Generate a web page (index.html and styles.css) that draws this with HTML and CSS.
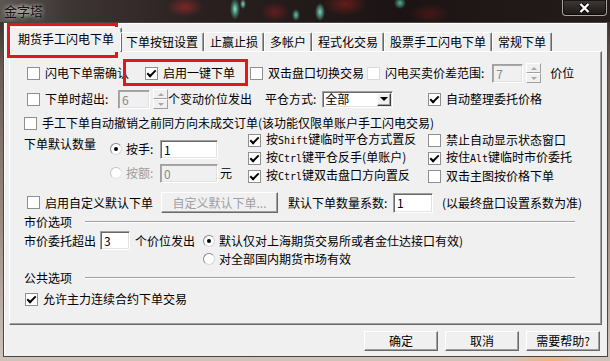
FILE: index.html
```html
<!DOCTYPE html>
<html lang="zh-CN">
<head>
  <meta charset="UTF-8">
  <title>金字塔</title>
  <link rel="stylesheet" href="styles.css">
</head>
<body>
  <div class="window">
    <div class="titlebar">
      <span class="title">金字塔</span>
      <button class="close-btn" title="关闭">
        <svg width="11" height="10" viewBox="0 0 11 10"><path d="M1.5 1 L9.5 9 M9.5 1 L1.5 9" stroke="#000" stroke-width="4"/><path d="M1.5 1 L9.5 9 M9.5 1 L1.5 9" stroke="#fff" stroke-width="2.4"/></svg>
      </button>
    </div>

    <div class="client">
      <div class="tabs">
        <div class="tab active">期货手工闪电下单</div>
        <div class="tab">下单按钮设置</div>
        <div class="tab">止赢止损</div>
        <div class="tab">多帐户</div>
        <div class="tab">程式化交易</div>
        <div class="tab">股票手工闪电下单</div>
        <div class="tab">常规下单</div>
      </div>

      <div class="panel">
        <div class="row row-flash">
          <label class="chk"><span class="cb"></span>闪电下单需确认</label>
          <label class="chk"><span class="cb on"></span>启用一键下单</label>
          <label class="chk"><span class="cb"></span>双击盘口切换交易</label>
          <div class="range">
            <label class="chk"><span class="cb dis"></span>闪电买卖价差范围:</label>
            <input class="field dis w-31" value="7" disabled>
            <span class="spin dis"><span class="up"></span><span class="down"></span></span>
            <span class="unit">价位</span>
          </div>
        </div>

        <div class="row row-over">
          <label class="chk"><span class="cb"></span>下单时超出:</label>
          <div class="inline">
            <input class="field dis w-32" value="6" disabled>
            <span class="spin dis"><span class="up"></span><span class="down"></span></span>
          </div>
          <span>个变动价位发出</span>
          <div class="inline gap-6">
            <span>平仓方式:</span>
            <div class="select"><span class="val">全部</span><span class="drop"></span></div>
          </div>
          <label class="chk"><span class="cb on"></span>自动整理委托价格</label>
        </div>

        <div class="row row-cancel">
          <label class="chk"><span class="cb"></span>手工下单自动撤销之前同方向未成交订单(该功能仅限单账户手工闪电交易)</label>
        </div>

        <div class="row row-qty">
          <div class="qty">
            <span class="qty-label">下单默认数量</span>
            <div class="qty-opts">
              <div class="qty-line">
                <label class="opt"><span class="rad on"></span><span class="opt-name">按手:</span></label>
                <input class="field w-58" value="1">
              </div>
              <div class="qty-line">
                <label class="opt dis"><span class="rad dis"></span><span class="opt-name">按额:</span></label>
                <input class="field dis w-58" value="0" disabled>
                <span class="yuan">元</span>
              </div>
            </div>
          </div>
          <div class="keys">
            <label class="chk"><span class="cb on"></span><span>按<span class="en">Shift</span>键临时平仓方式置反</span></label>
            <label class="chk"><span class="cb"></span>禁止自动显示状态窗口</label>
            <label class="chk"><span class="cb on"></span><span>按<span class="en">Ctrl</span>键平仓反手(单账户)</span></label>
            <label class="chk"><span class="cb on"></span><span>按住<span class="en">Alt</span>键临时市价委托</span></label>
            <label class="chk"><span class="cb on"></span><span>按<span class="en">Ctrl</span>键双击盘口方向置反</span></label>
            <label class="chk"><span class="cb"></span>双击主图按价格下单</label>
          </div>
        </div>

        <div class="row row-custom">
          <label class="chk"><span class="cb"></span>启用自定义默认下单</label>
          <div><button class="btn btn-custom" disabled>自定义默认下单...</button></div>
          <span>默认下单数量系数:</span>
          <div><input class="field w-40" value="1"></div>
          <span>(以最终盘口设置系数为准)</span>
        </div>

        <div class="group group-market">市价选项</div>

        <div class="row row-market">
          <span>市价委托超出</span>
          <div><input class="field w-30" value="3"></div>
          <span>个价位发出</span>
          <label class="opt"><span class="rad on"></span>默认仅对上海期货交易所或者金仕达接口有效)</label>
        </div>
        <div class="row row-market-all">
          <label class="opt"><span class="rad"></span>对全部国内期货市场有效</label>
        </div>

        <div class="group group-common">公共选项</div>

        <div class="row row-main">
          <label class="chk"><span class="cb on"></span>允许主力连续合约下单交易</label>
        </div>
      </div>

      <div class="footer">
        <button class="btn">确定</button>
        <button class="btn">取消</button>
        <button class="btn">需要帮助?</button>
      </div>
    </div>

    <!-- red annotation boxes -->
    <div class="mark mark-tab"></div>
    <div class="mark mark-onekey"></div>
  </div>
</body>
</html>
```

FILE: styles.css
```css
* {
  box-sizing: border-box;
}

body {
  margin: 0;
  width: 610px;
  height: 361px;
  overflow: hidden;
  font-family: "Noto Sans CJK SC", "Noto Sans", sans-serif;
  font-size: 12px;
  line-height: 14px;
  color: #000;
  background: #2a2420;
}

.window {
  position: relative;
  width: 610px;
  height: 361px;
  display: flex;
  flex-direction: column;
  background:
    radial-gradient(40px 8px at 550px 361px, #f2b27a, transparent),
    linear-gradient(to bottom, #3a3330 0, #3a3330 22px, #6b5d55 70px, #9b8a7e 220px, #cfc4bc 361px);
}

/* title bar */
.titlebar {
  height: 22px;
  flex: none;
  display: flex;
  align-items: flex-start;
  justify-content: space-between;
  background:
    radial-gradient(5px 11px at 235px 9px, #8ae6cf, rgba(80, 190, 160, .5) 55%, transparent),
    radial-gradient(3px 5px at 243px 4px, #7ad8c0, transparent),
    radial-gradient(4px 6px at 296px 15px, #5ec4aa, transparent),
    radial-gradient(5px 9px at 320px 12px, #74d8c0, transparent),
    radial-gradient(6px 6px at 400px 3px, #4fb49c, transparent),
    radial-gradient(18px 10px at 185px 7px, rgba(170, 40, 40, .65), transparent),
    radial-gradient(14px 10px at 275px 12px, rgba(150, 30, 30, .55), transparent),
    radial-gradient(22px 12px at 345px 4px, rgba(160, 30, 30, .55), transparent),
    radial-gradient(20px 10px at 430px 14px, rgba(120, 25, 25, .45), transparent),
    linear-gradient(to right, #5d5753 0, #3d3533 70px, #2a2020 200px, #1c1414 400px, #231c1a 610px);
}

.title {
  margin: 3px 0 0 1px;
  padding: 0 3px;
  font-size: 13px;
  line-height: 16px;
  color: #141414;
  background: radial-gradient(closest-side, rgba(215, 212, 208, .55), transparent);
  text-shadow: 0 0 4px #cfcac6;
}

.close-btn {
  width: 45px;
  height: 16px;
  margin-right: 3px;
  padding: 0;
  border: 1px solid #a8a4a2;
  border-top: 0;
  border-radius: 0 0 4px 4px;
  background: linear-gradient(#3e3836, #1c1817);
  box-shadow: inset 0 0 0 1px rgba(0, 0, 0, .6);
  display: flex;
  align-items: center;
  justify-content: center;
}

/* dialog client */
.client {
  height: 335px;
  margin: 0 2px 0 3px;
  padding: 0 5px;
  background: #f0f0f0;
  border: 1px solid #4a4644;
  box-shadow: inset 1px 1px #fff;
  display: flex;
  flex-direction: column;
}

.tabs {
  height: 28px;
  flex: none;
  display: flex;
  align-items: flex-end;
  padding-left: 3px;
  position: relative;
  z-index: 1;
}

.tab {
  height: 19px;
  padding: 0 5px;
  border: 1px solid;
  border-color: #fff #696969 transparent #fff;
  border-bottom: 0;
  border-radius: 2px 2px 0 0;
  box-shadow: inset -1px 0 #a0a0a0;
  line-height: 18px;
  white-space: nowrap;
}

.tab.active {
  height: 25px;
  margin: 0 -2px -1px;
  padding: 0 7px;
  line-height: 22px;
  background: #f0f0f0;
}

.panel {
  height: 274px;
  flex: none;
  padding-left: 14px;
  border: 1px solid;
  border-color: #fff #696969 #696969 #fff;
  box-shadow: inset -1px -1px #a0a0a0;
}

.row {
  display: flex;
  align-items: center;
  white-space: nowrap;
}

.row-flash {
  display: grid;
  grid-template-columns: 118px 105px 117px auto;
  align-items: center;
  height: 20px;
  margin-top: 11px;
  padding-left: 3px;
}

.row-over {
  display: grid;
  grid-template-columns: 91px 50px 97px 163px auto;
  align-items: center;
  height: 20px;
  margin-top: 6px;
  padding-left: 3px;
}

.row-cancel {
  height: 14px;
  margin-top: 7px;
}

.row-qty {
  display: grid;
  grid-template-columns: 224px auto;
  align-items: start;
  height: 55px;
}

.row-custom {
  display: grid;
  grid-template-columns: 134px 127px 105px 49px auto;
  align-items: center;
  height: 21px;
  margin-top: 7px;
  padding-left: 3px;
}

.row-market {
  display: grid;
  grid-template-columns: 76px 35px 68px auto;
  align-items: center;
  height: 19px;
  margin-top: 2px;
}

.row-market-all {
  height: 18px;
  padding-left: 179px;
}

.row-main {
  height: 18px;
  margin-top: 5px;
  padding-left: 1px;
}

.inline {
  display: flex;
  align-items: center;
  gap: 3px;
}

.gap-6 {
  gap: 6px;
}

/* checkbox & radio */
.chk,
.opt {
  display: inline-flex;
  align-items: center;
  gap: 5px;
  white-space: nowrap;
}

.opt {
  gap: 4px;
}

.cb {
  position: relative;
  flex: none;
  width: 13px;
  height: 13px;
  background: #fff;
  border: 1px solid #8e8f8f;
}

.cb.on::after {
  content: "";
  position: absolute;
  left: 3px;
  top: 0;
  width: 3px;
  height: 7px;
  border: solid #000;
  border-width: 0 2px 2px 0;
  transform: rotate(45deg);
}

.cb.dis {
  border-color: #dadada;
}

.rad {
  position: relative;
  flex: none;
  width: 12px;
  height: 12px;
  border-radius: 50%;
  background: #fff;
  border: 1px solid;
  border-color: #8a8a8a #d8d8d8 #d8d8d8 #8a8a8a;
}

.rad.on::after {
  content: "";
  position: absolute;
  left: 3px;
  top: 3px;
  width: 4px;
  height: 4px;
  border-radius: 50%;
  background: #000;
}

.rad.dis {
  border-color: #c4c4c4 #e4e4e4 #e4e4e4 #c4c4c4;
}

.opt.dis .opt-name {
  color: #9d9d9d;
}

.en {
  font-family: "DejaVu Sans Mono", "Liberation Mono", monospace;
  font-size: 10px;
}

/* edit fields */
.field {
  height: 19px;
  padding: 0 0 0 3px;
  font: inherit;
  color: #000;
  background: #fff;
  border: 1px solid;
  border-color: #a0a0a0 #fff #fff #a0a0a0;
  box-shadow: inset 1px 1px #696969, inset -1px -1px #e3e3e3;
  outline: none;
}

.field.dis {
  background: #f0f0f0;
  color: #8a8a8a;
  box-shadow: inset 1px 1px #a8a8a8, inset -1px -1px #e3e3e3;
}

.w-30 { width: 30px; }
.w-31 { width: 31px; }
.w-32 { width: 32px; }
.w-40 { width: 40px; height: 20px; }
.w-58 { width: 58px; }

.spin {
  display: flex;
  flex-direction: column;
  width: 15px;
  height: 20px;
}

.spin span {
  flex: 1;
  display: flex;
  align-items: center;
  justify-content: center;
  background: #f0f0f0;
  border: 1px solid;
  border-color: #fff #a0a0a0 #a0a0a0 #fff;
}

.spin span::after {
  content: "";
  border-left: 3px solid transparent;
  border-right: 3px solid transparent;
}

.spin .up::after {
  border-bottom: 3px solid #000;
}

.spin .down::after {
  border-top: 3px solid #000;
}

.spin.dis .up::after {
  border-bottom-color: #a8a8a8;
}

.spin.dis .down::after {
  border-top-color: #a8a8a8;
}

.range {
  display: flex;
  align-items: center;
}

.range .field {
  margin-left: 8px;
}

.range .spin {
  margin-left: 3px;
}

.range .unit {
  margin-left: 9px;
}

.select {
  display: flex;
  align-items: center;
  width: 71px;
  height: 17px;
  padding: 0 1px 0 2px;
  background: #fff;
  border: 1px solid;
  border-color: #a0a0a0 #fff #fff #a0a0a0;
  box-shadow: inset 1px 1px #696969, inset -1px -1px #e3e3e3;
}

.select .val {
  flex: 1;
}

.select .drop {
  width: 14px;
  height: 13px;
  display: flex;
  align-items: center;
  justify-content: center;
  background: #f0f0f0;
  border: 1px solid;
  border-color: #fff #404040 #404040 #fff;
  box-shadow: inset -1px -1px #a0a0a0;
}

.select .drop::after {
  content: "";
  border-left: 4px solid transparent;
  border-right: 4px solid transparent;
  border-top: 4px solid #000;
}

/* quantity block */
.qty {
  display: flex;
  align-items: flex-start;
}

.qty-label {
  width: 86px;
  margin-top: 7px;
}

.qty-opts {
  display: flex;
  flex-direction: column;
  gap: 4px;
  padding-top: 9px;
}

.qty-line {
  display: flex;
  align-items: center;
  height: 20px;
}

.opt-name {
  width: 34px;
}

.yuan {
  margin-left: 2px;
}

.keys {
  display: grid;
  grid-template-columns: 180px auto;
  grid-auto-rows: 18px;
  align-items: center;
  padding-top: 1px;
}

/* group headers */
.group {
  display: flex;
  align-items: center;
  height: 14px;
}

.group::after {
  content: "";
  flex: 1;
  margin: 0 26px 0 13px;
  border-top: 1px solid #a0a0a0;
  border-bottom: 1px solid #fff;
}

.group-market {
  margin-top: 2px;
}

.group-common {
  margin-top: 3px;
}

/* buttons */
.btn {
  width: 74px;
  height: 20px;
  padding: 0;
  font: inherit;
  color: #000;
  background: #f0f0f0;
  border: 1px solid;
  border-color: #fff #696969 #696969 #fff;
  box-shadow: inset -1px -1px #a0a0a0;
}

.btn-custom {
  width: 117px;
  height: 21px;
  color: #a0a0a0;
}

.footer {
  display: flex;
  justify-content: flex-end;
  gap: 7px;
  padding: 6px 2px 0 0;
}

/* red annotation boxes */
.mark {
  position: absolute;
  border: 3px solid #e3161e;
  pointer-events: none;
}

.mark-tab {
  left: 7px;
  top: 23px;
  width: 111px;
  height: 35px;
}

.mark-onekey {
  left: 123px;
  top: 59px;
  width: 125px;
  height: 27px;
}
```
